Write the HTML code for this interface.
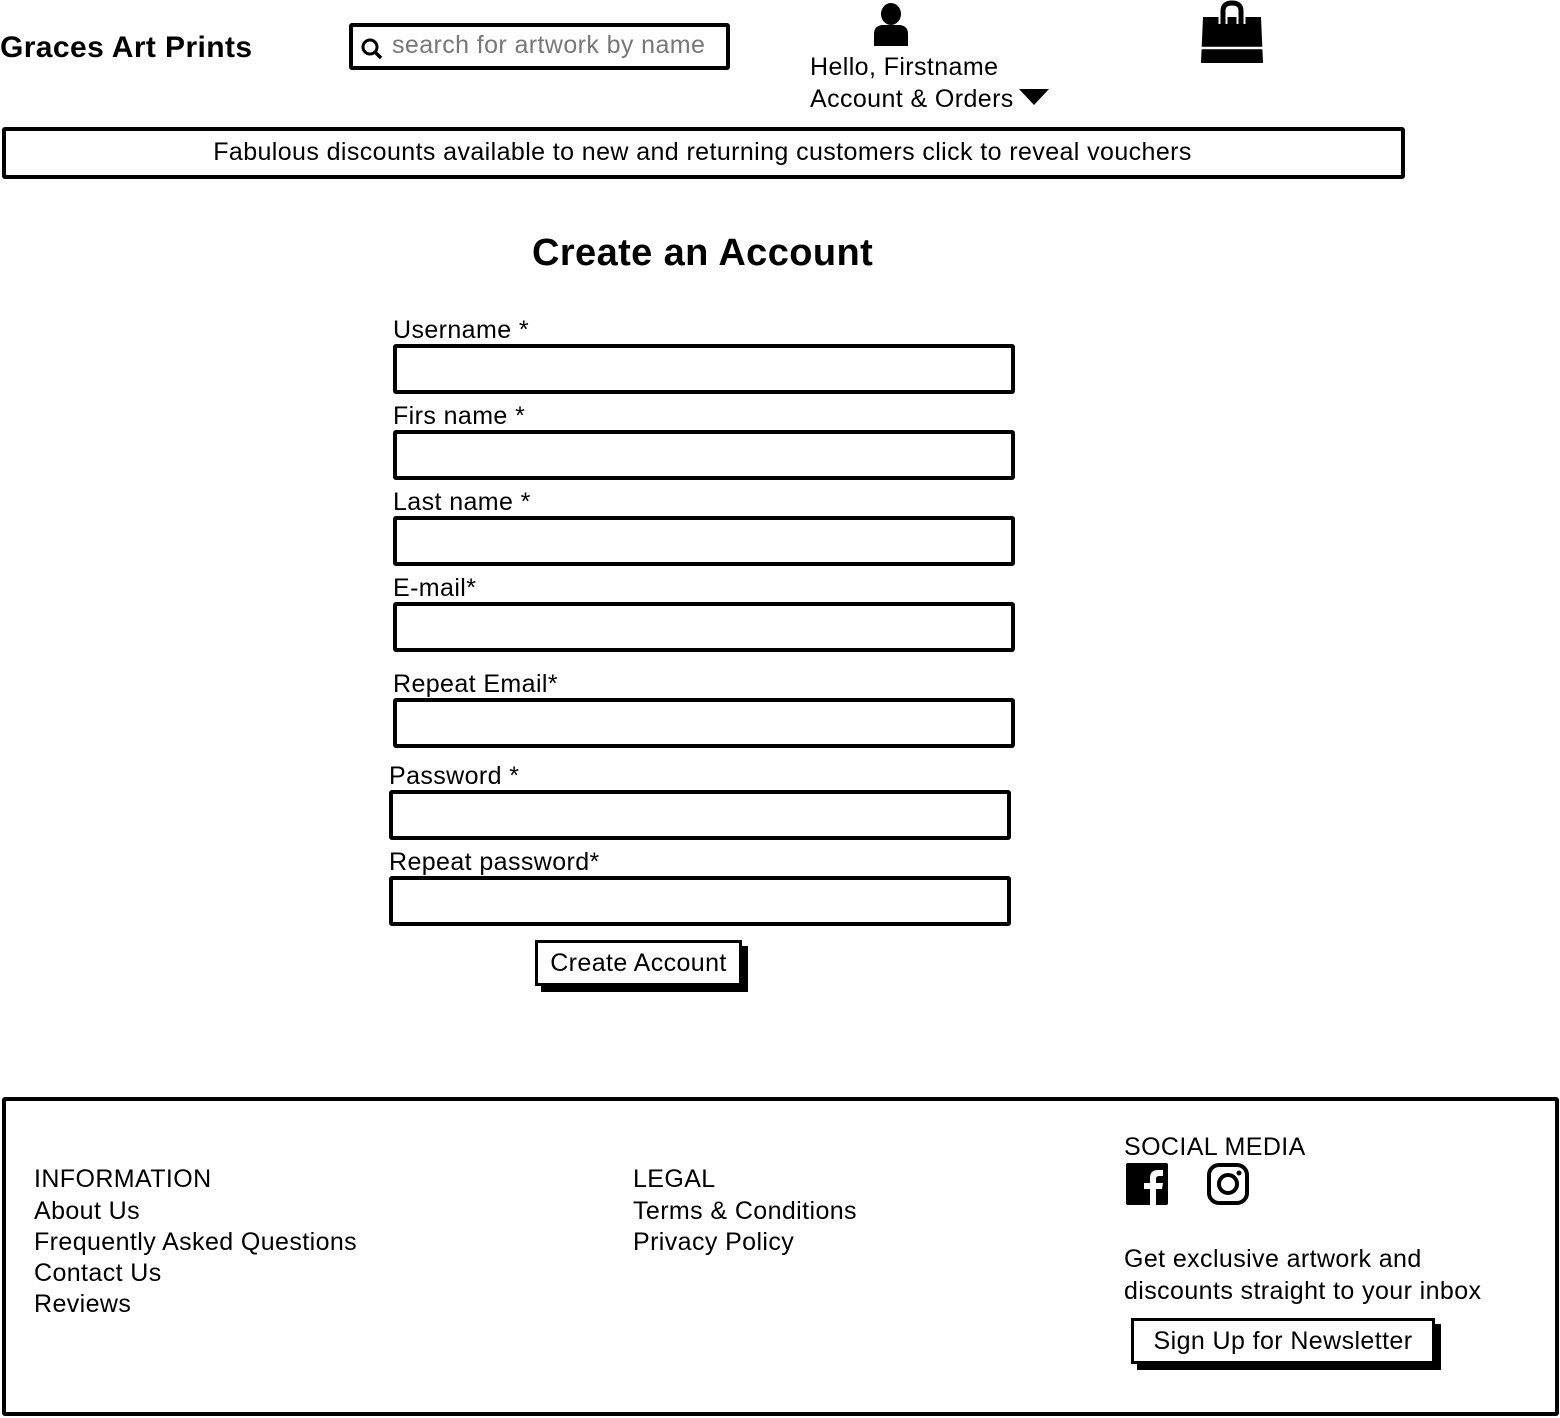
<!DOCTYPE html>
<html><head><meta charset="utf-8"><style>
body{margin:0;width:1560px;height:1418px;background:#fff;position:relative;font-family:"Liberation Sans",sans-serif;color:#000;overflow:hidden}
.a{position:absolute;white-space:nowrap}
.t{font-size:25px;line-height:28px;letter-spacing:0.4px}
.box{position:absolute;border:3px solid #000;border-radius:3px;box-sizing:border-box;background:#fff}
.btn{position:absolute;border:3px solid #000;box-sizing:border-box;background:#fff;box-shadow:6px 6px 0 #000;font-size:25px;letter-spacing:0.4px;text-align:center}
</style></head><body>
<div class="a" style="left:0;top:31px;font-size:30px;font-weight:bold;line-height:34px;letter-spacing:0.4px">Graces Art Prints</div>
<div class="box" style="left:349px;top:23px;width:381px;height:47px;border-width:4px"></div>
<svg class="a" style="left:360px;top:37px" width="24" height="24" viewBox="0 0 24 24"><circle cx="10" cy="10" r="7" fill="none" stroke="#000" stroke-width="3"/><path d="M15 15l6 6" stroke="#000" stroke-width="3.5"/></svg>
<div class="a t" style="left:392px;top:31px;color:#777">search for artwork by name</div>
<svg class="a" style="left:872px;top:2px" width="38" height="44" viewBox="0 0 38 44"><ellipse cx="19" cy="12" rx="10" ry="11"/><path d="M2 44V32q0-8 8-9h18q8 1 8 9v12z"/></svg>
<div class="a t" style="left:810px;top:53px">Hello, Firstname</div>
<div class="a t" style="left:810px;top:85px">Account &amp; Orders</div>
<svg class="a" style="left:1019px;top:89px" width="30" height="16"><path d="M0 0h30L15 16z"/></svg>
<svg class="a" style="left:1199px;top:0" width="66" height="66" viewBox="0 0 66 66"><path d="M4 17h58l2 46H2z"/><path d="M2 48h62" stroke="#fff" stroke-width="2.5"/><path d="M24 24V11q0-8 9-8t9 8v13" fill="none" stroke="#fff" stroke-width="9"/><path d="M24 24V11q0-8 9-8t9 8v13" fill="none" stroke="#000" stroke-width="5"/></svg>
<div class="box" style="left:2px;top:127px;width:1403px;height:52px;border-width:4px"></div>
<div class="a t" style="left:0;width:1405px;top:138px;text-align:center">Fabulous discounts available to new and returning customers click to reveal vouchers</div>
<div class="a" style="left:532px;top:232px;font-size:38px;font-weight:bold;line-height:42px;letter-spacing:0.4px">Create an Account</div>

<div class="a t" style="left:393px;top:316px">Username *</div>
<div class="box" style="left:393px;top:344px;width:622px;height:50px;border-width:4px"></div>
<div class="a t" style="left:393px;top:402px">Firs name *</div>
<div class="box" style="left:393px;top:430px;width:622px;height:50px;border-width:4px"></div>
<div class="a t" style="left:393px;top:488px">Last name *</div>
<div class="box" style="left:393px;top:516px;width:622px;height:50px;border-width:4px"></div>
<div class="a t" style="left:393px;top:574px">E-mail*</div>
<div class="box" style="left:393px;top:602px;width:622px;height:50px;border-width:4px"></div>
<div class="a t" style="left:393px;top:670px">Repeat Email*</div>
<div class="box" style="left:393px;top:698px;width:622px;height:50px;border-width:4px"></div>
<div class="a t" style="left:389px;top:762px">Password *</div>
<div class="box" style="left:389px;top:790px;width:622px;height:50px;border-width:4px"></div>
<div class="a t" style="left:389px;top:848px">Repeat password*</div>
<div class="box" style="left:389px;top:876px;width:622px;height:50px;border-width:4px"></div>
<div class="btn" style="left:535px;top:940px;width:207px;height:46px;line-height:40px">Create Account</div>

<div class="box" style="left:2px;top:1097px;width:1557px;height:319px;border-width:4px"></div>
<div class="a t" style="left:34px;top:1165px">INFORMATION</div>
<div class="a t" style="left:34px;top:1197px">About Us</div>
<div class="a t" style="left:34px;top:1228px">Frequently Asked Questions</div>
<div class="a t" style="left:34px;top:1259px">Contact Us</div>
<div class="a t" style="left:34px;top:1290px">Reviews</div>
<div class="a t" style="left:633px;top:1165px">LEGAL</div>
<div class="a t" style="left:633px;top:1197px">Terms &amp; Conditions</div>
<div class="a t" style="left:633px;top:1228px">Privacy Policy</div>
<div class="a t" style="left:1124px;top:1133px">SOCIAL MEDIA</div>
<svg class="a" style="left:1126px;top:1163px" width="42" height="42" viewBox="0 0 42 42"><rect width="42" height="42" rx="2"/><path d="M24 42V26h-6v-6h6v-5q0-8 8-8h5v6h-4q-3 0-3 3v4h7l-1 6h-6v16z" fill="#fff"/></svg>
<svg class="a" style="left:1207px;top:1163px" width="42" height="42" viewBox="0 0 42 42"><rect x="2" y="2" width="38" height="38" rx="10" fill="none" stroke="#000" stroke-width="4"/><circle cx="21" cy="21" r="9" fill="none" stroke="#000" stroke-width="4"/><circle cx="32" cy="10" r="2.5"/></svg>
<div class="a t" style="left:1124px;top:1245px">Get exclusive artwork and</div>
<div class="a t" style="left:1124px;top:1277px">discounts straight to your inbox</div>
<div class="btn" style="left:1131px;top:1318px;width:304px;height:46px;line-height:40px">Sign Up for Newsletter</div>
</body></html>
